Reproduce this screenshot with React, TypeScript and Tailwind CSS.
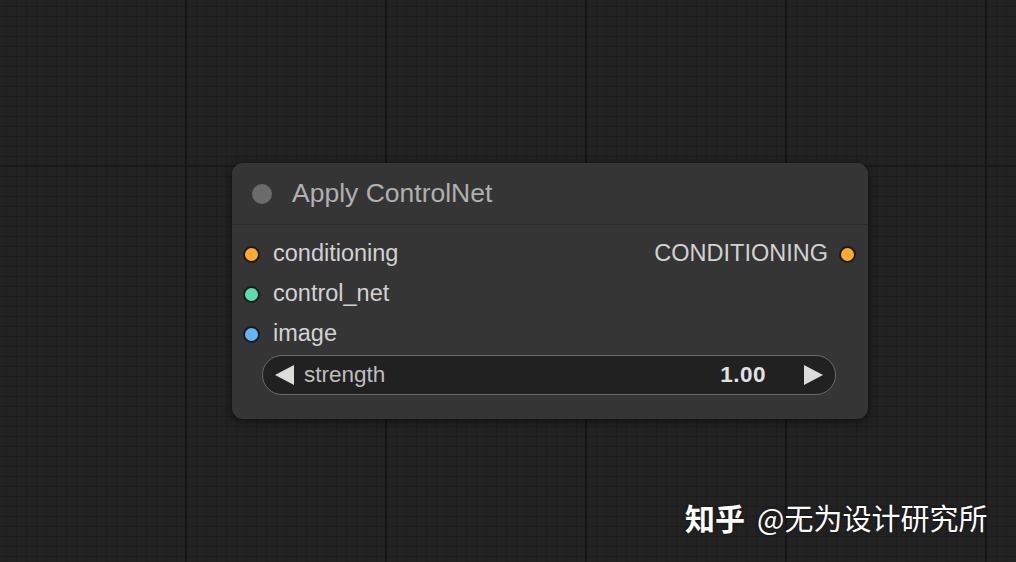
import React from 'react';

// ComfyUI-style node: Apply ControlNet
type Slot = { name: string; color: string };

const inputs: Slot[] = [
  { name: 'conditioning', color: 'bg-[#ffa931]' },
  { name: 'control_net', color: 'bg-[#5fdcab]' },
  { name: 'image', color: 'bg-[#64b5f6]' },
];

function Dot({ color }: { color: string }) {
  return <span className={`block w-[17px] h-[17px] rounded-full border-2 border-[#1c1c1c] ${color}`} />;
}

function StrengthWidget() {
  return (
    <div className="ml-[30px] mt-[1px] w-[574px] h-[40px] rounded-full border border-[#6a6a6a] bg-[#212121] flex items-center pl-[12px] pr-[12px] text-[22.5px]">
      <svg width="19" height="20" viewBox="0 0 19 20" className="shrink-0">
        <polygon points="0,10 19,0 19,20" fill="#dcdcdc" />
      </svg>
      <span className="ml-[10px] text-[#bdbdbd]">strength</span>
      <span className="ml-auto text-[#e2e2e2] font-bold tracking-[0.5px]">1.00</span>
      <svg width="19" height="20" viewBox="0 0 19 20" className="shrink-0 ml-[38px]">
        <polygon points="19,10 0,0 0,20" fill="#dcdcdc" />
      </svg>
    </div>
  );
}

function ApplyControlNetNode() {
  return (
    <div className="absolute left-[232px] top-[163px] w-[636px] h-[256px] rounded-[11px] bg-[#353535] shadow-[0_2px_10px_rgba(0,0,0,0.6)] font-['Liberation_Sans',Arial,sans-serif]">
      {/* title */}
      <div className="h-[62px] flex items-center pl-[20px] border-b border-[#2b2b2b]">
        <span className="block w-[20px] h-[20px] rounded-full bg-[#6b6b6b]" />
        <span className="ml-[20px] text-[26.5px] text-[#b0b0b0]">Apply ControlNet</span>
      </div>

      {/* slots */}
      <div className="pt-[9px]">
        {inputs.map((slot, idx) => (
          <div key={slot.name} className="h-[40px] flex items-center pl-[11px] pr-[12px]">
            <Dot color={slot.color} />
            <span className="ml-[13px] text-[23.5px] text-[#d2d2d2]">{slot.name}</span>
            {idx === 0 && (
              <>
                <span className="ml-auto text-[23.5px] text-[#d2d2d2]">CONDITIONING</span>
                <span className="ml-[11px]">
                  <Dot color="bg-[#ffa931]" />
                </span>
              </>
            )}
          </div>
        ))}
        <StrengthWidget />
      </div>
    </div>
  );
}

export default function App() {
  return (
    <div className="relative w-[1016px] h-[562px] overflow-hidden bg-[#222222] bg-[image:linear-gradient(to_right,#151515_2px,transparent_2px),linear-gradient(to_bottom,#181818_2px,transparent_2px),linear-gradient(to_right,#1d1d1d_1px,transparent_1px),linear-gradient(to_bottom,#1d1d1d_1px,transparent_1px)] bg-[size:200px_200px,200px_400px,10px_10px,10px_10px] bg-[position:185px_165px,185px_165px,6px_6px,6px_6px]">
      <ApplyControlNetNode />

      {/* watermark */}
      <div className="absolute left-[685px] top-[502px] flex items-center text-white leading-none font-['Noto_Sans_CJK_SC',sans-serif] [text-shadow:0_0_3px_rgba(0,0,0,0.6)]">
        <span className="font-bold text-[30px]">知乎</span>
        <span className="ml-[12px] text-[29px]">@无为设计研究所</span>
      </div>
    </div>
  );
}
